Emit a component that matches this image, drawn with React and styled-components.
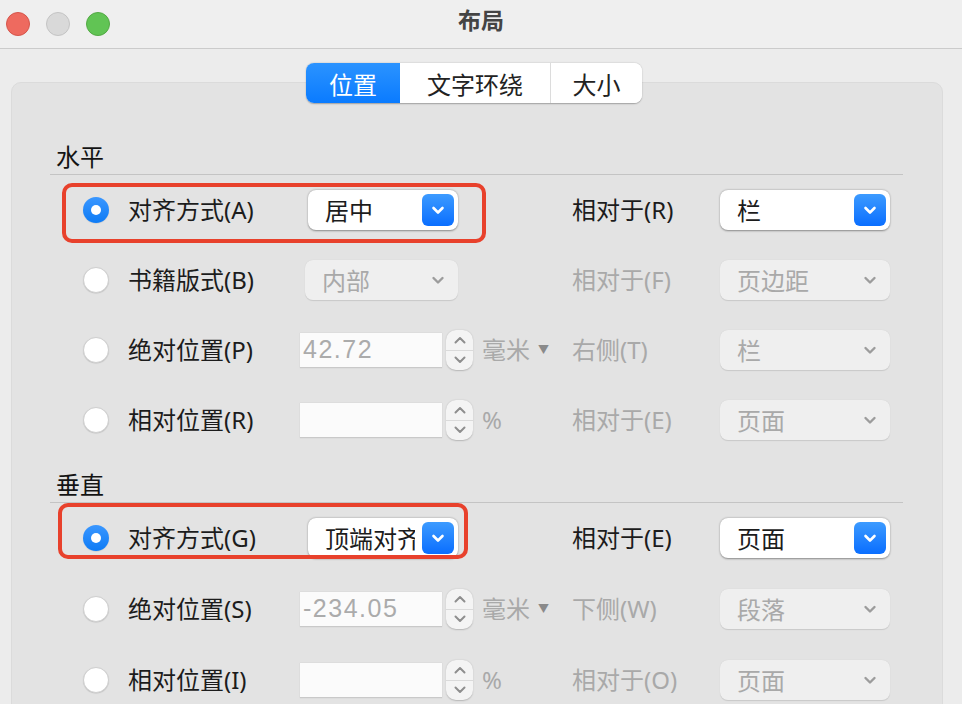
import React from 'react';
import styled, { createGlobalStyle } from 'styled-components';

const GlobalStyle = createGlobalStyle`
  html, body {
    margin: 0;
    padding: 0;
    background: #ececec;
    overflow: hidden;
  }
  body {
    font-family: "Noto Sans", "Noto Sans CJK SC", sans-serif;
  }
`;

const Window = styled.div`
  width: 962px;
  height: 704px;
  overflow: hidden;
  background: #ececec;
`;

const TitleBar = styled.div`
  height: 48px;
  display: grid;
  grid-template-columns: 1fr auto 1fr;
  align-items: center;
  background: #efefef;
  border-bottom: 1px solid #cbcbcb;
`;

const Lights = styled.div`
  display: flex;
  gap: 16px;
  padding-left: 6px;
`;

const Light = styled.span`
  width: 24px;
  height: 24px;
  box-sizing: border-box;
  border-radius: 50%;
  background: ${p => p.color};
  border: 1px solid ${p => p.edge};
`;

const Title = styled.div`
  font-size: 23px;
  font-weight: 600;
  color: #444;
  line-height: 1.2;
  padding-bottom: 6px;
`;

const Body = styled.div`
  padding: 14px 19px 0 11px;
`;

const TabsRow = styled.div`
  display: flex;
  justify-content: center;
  padding-right: 6px;
  position: relative;
  z-index: 1;
  margin-bottom: -21px;
`;

const Tabs = styled.div`
  display: flex;
  height: 40px;
  border-radius: 8px;
  background: #fff;
  box-shadow: 0 0.5px 1.5px rgba(0, 0, 0, 0.3);
  overflow: hidden;
`;

const Tab = styled.div`
  width: ${p => p.w}px;
  display: flex;
  align-items: center;
  justify-content: center;
  font-size: 24px;
  color: ${p => (p.active ? '#fff' : '#222')};
  background: ${p => (p.active ? 'linear-gradient(#2b93ff, #0a7bff)' : '#fff')};
  border-left: ${p => (p.divider ? '1px solid #dcdcdc' : 'none')};
  box-sizing: border-box;
`;

const Panel = styled.div`
  background: #e3e3e3;
  border: 1px solid #dbdbdb;
  border-radius: 10px;
  padding: 44px 39px 40px 38px;
  min-height: 640px;
`;

const Heading = styled.div`
  height: 48px;
  box-sizing: border-box;
  display: flex;
  align-items: flex-end;
  padding: 0 0 2px 6px;
  font-size: 24px;
  line-height: 30px;
  color: #141414;
  border-bottom: 1px solid #c4c4c4;
`;

const Row = styled.div`
  position: relative;
  height: ${p => p.h || 70}px;
  display: grid;
  grid-template-columns: 45px 172px 272px 148px 170px;
  align-items: center;
  padding-left: 33px;
`;

const Highlight = styled.div`
  position: absolute;
  left: ${p => p.left}px;
  top: ${p => p.top}px;
  width: ${p => p.w}px;
  height: ${p => p.h}px;
  box-sizing: border-box;
  border: 4px solid #e8412c;
  border-radius: 10px;
  pointer-events: none;
  z-index: 2;
`;

const Radio = styled.span`
  width: 26px;
  height: 26px;
  box-sizing: border-box;
  border-radius: 50%;
  display: flex;
  align-items: center;
  justify-content: center;
  background: ${p => (p.checked ? 'linear-gradient(#3a97ff, #0e7bf5)' : '#fff')};
  border: ${p => (p.checked ? 'none' : '1px solid #cfcfcf')};
  box-shadow: 0 0.5px 1px rgba(0, 0, 0, 0.15);

  &::after {
    content: '';
    display: ${p => (p.checked ? 'block' : 'none')};
    width: 10px;
    height: 10px;
    border-radius: 50%;
    background: #fff;
  }
`;

const Label = styled.span`
  font-size: 24px;
  line-height: 30px;
  color: ${p => (p.dim ? '#a9a9a9' : '#1c1c1c')};
  white-space: nowrap;
`;

const Controls = styled.div`
  display: flex;
  align-items: center;
`;

const SelectBox = styled.div`
  width: ${p => p.w}px;
  margin-left: ${p => p.offset || 0}px;
  height: 40px;
  box-sizing: border-box;
  border-radius: 8px;
  display: flex;
  align-items: center;
  padding-left: 17px;
  background: ${p => (p.active ? '#fff' : '#efefef')};
  box-shadow: ${p => (p.active ? '0 0.5px 2px rgba(0,0,0,0.4)' : '0 0.5px 1px rgba(0,0,0,0.12)')};
`;

const SelectText = styled.span`
  flex: 1;
  height: 40px;
  margin-right: ${p => (p.active ? 7 : 0)}px;
  overflow: hidden;
  white-space: nowrap;
  font-family: "Noto Sans CJK SC", sans-serif;
  font-size: 24px;
  line-height: 40px;
  color: ${p => (p.active ? '#1c1c1c' : '#a9a9a9')};
`;

const BlueButton = styled.span`
  flex: none;
  width: 32px;
  height: 32px;
  margin-right: 4px;
  border-radius: 6px;
  background: linear-gradient(#3d9bff, #0a6eff);
  display: flex;
  align-items: center;
  justify-content: center;
`;

const GrayChevron = styled.span`
  flex: none;
  width: 32px;
  margin-right: 4px;
  display: flex;
  align-items: center;
  justify-content: center;
`;

const NumberInput = styled.div`
  width: 142px;
  height: 35px;
  box-sizing: border-box;
  background: #fbfbfb;
  border-bottom: 1.5px solid #c9c9c9;
  box-shadow: 0 0 1px rgba(0, 0, 0, 0.15);
  padding-left: 3px;
  display: flex;
  align-items: center;
  font-family: "Liberation Sans", "Noto Sans", sans-serif;
  font-size: 25px;
  letter-spacing: 1.5px;
  color: #ababab;
`;

const Stepper = styled.div`
  width: 27px;
  height: 40px;
  margin-left: 4px;
  box-sizing: border-box;
  border-radius: 10px;
  background: #f4f4f4;
  box-shadow: 0 0.5px 1.5px rgba(0, 0, 0, 0.2);
  display: flex;
  flex-direction: column;
  align-items: center;
  justify-content: space-evenly;
`;

const StepLine = styled.span`
  width: 100%;
  height: 1px;
  background: #dadada;
`;

const Unit = styled.span`
  margin-left: 9px;
  font-size: 24px;
  line-height: 30px;
  color: #a9a9a9;
  display: flex;
  align-items: center;
  gap: 8px;
`;

const Caret = styled.span`
  font-size: 11px;
  color: #8a8a8a;
`;

const Chevron = ({ color = '#fff', size = 16, width = 2.6 }) => (
  <svg width={size} height={size} viewBox="0 0 16 16">
    <path d="M3.5 6 L8 10.5 L12.5 6" fill="none" stroke={color} strokeWidth={width} strokeLinecap="round" strokeLinejoin="round" />
  </svg>
);

const StepArrow = ({ up }) => (
  <svg width="14" height="10" viewBox="0 0 14 10">
    <path d={up ? 'M2.5 7.5 L7 3 L11.5 7.5' : 'M2.5 2.5 L7 7 L11.5 2.5'} fill="none" stroke="#8e8e8e" strokeWidth="2" strokeLinecap="round" strokeLinejoin="round" />
  </svg>
);

const Select = ({ text, active, w, offset }) => (
  <SelectBox active={active} w={w} offset={offset}>
    <SelectText active={active}>{text}</SelectText>
    {active ? (
      <BlueButton><Chevron /></BlueButton>
    ) : (
      <GrayChevron><Chevron color="#9c9c9c" size={16} width={2.4} /></GrayChevron>
    )}
  </SelectBox>
);

const NumberField = ({ value, unit, caret }) => (
  <>
    <NumberInput>{value}</NumberInput>
    <Stepper>
      <StepArrow up />
      <StepLine />
      <StepArrow />
    </Stepper>
    <Unit>
      {unit}
      {caret && <Caret>▼</Caret>}
    </Unit>
  </>
);

const horizontal = [
  {
    label: '对齐方式(A)', checked: true, control: { type: 'select', text: '居中', active: true },
    right: '相对于(R)', rightDim: false, rightSelect: { text: '栏', active: true },
    highlight: { left: 12, top: 8, w: 424, h: 60 },
  },
  {
    label: '书籍版式(B)', control: { type: 'select', text: '内部' },
    right: '相对于(F)', rightDim: true, rightSelect: { text: '页边距' },
  },
  {
    label: '绝对位置(P)', control: { type: 'number', value: '42.72', unit: '毫米', caret: true },
    right: '右侧(T)', rightDim: true, rightSelect: { text: '栏' },
  },
  {
    label: '相对位置(R)', control: { type: 'number', value: '', unit: '%' },
    right: '相对于(E)', rightDim: true, rightSelect: { text: '页面' },
  },
];

const vertical = [
  {
    label: '对齐方式(G)', checked: true, control: { type: 'select', text: '顶端对齐', active: true },
    right: '相对于(E)', rightDim: false, rightSelect: { text: '页面', active: true },
    highlight: { left: 8, top: 0, w: 410, h: 56 },
  },
  {
    label: '绝对位置(S)', control: { type: 'number', value: '-234.05', unit: '毫米', caret: true },
    right: '下侧(W)', rightDim: true, rightSelect: { text: '段落' },
    h: 72,
  },
  {
    label: '相对位置(I)', control: { type: 'number', value: '', unit: '%' },
    right: '相对于(O)', rightDim: true, rightSelect: { text: '页面' },
  },
];

const OptionRow = ({ row }) => (
  <Row h={row.h}>
    {row.highlight && <Highlight {...row.highlight} />}
    <Radio checked={row.checked} />
    <Label>{row.label}</Label>
    <Controls>
      {row.control.type === 'select' ? (
        <Select
          text={row.control.text}
          active={row.control.active}
          w={row.control.active ? 150 : 153}
          offset={row.control.active ? 8 : 5}
        />
      ) : (
        <NumberField value={row.control.value} unit={row.control.unit} caret={row.control.caret} />
      )}
    </Controls>
    <Label dim={row.rightDim}>{row.right}</Label>
    <Select text={row.rightSelect.text} active={row.rightSelect.active} w={170} />
  </Row>
);

export default function App() {
  return (
    <Window>
      <GlobalStyle />
      <TitleBar>
        <Lights>
          <Light color="#ee6a5f" edge="#d5554b" />
          <Light color="#d9d9d9" edge="#c4c4c4" />
          <Light color="#61c454" edge="#53a944" />
        </Lights>
        <Title>布局</Title>
        <div />
      </TitleBar>
      <Body>
        <TabsRow>
          <Tabs>
            <Tab w={94} active>位置</Tab>
            <Tab w={150}>文字环绕</Tab>
            <Tab w={92} divider>大小</Tab>
          </Tabs>
        </TabsRow>
        <Panel>
          <Heading>水平</Heading>
          {horizontal.map(r => <OptionRow key={r.label} row={r} />)}
          <Heading>垂直</Heading>
          {vertical.map(r => <OptionRow key={r.label} row={r} />)}
        </Panel>
      </Body>
    </Window>
  );
}
